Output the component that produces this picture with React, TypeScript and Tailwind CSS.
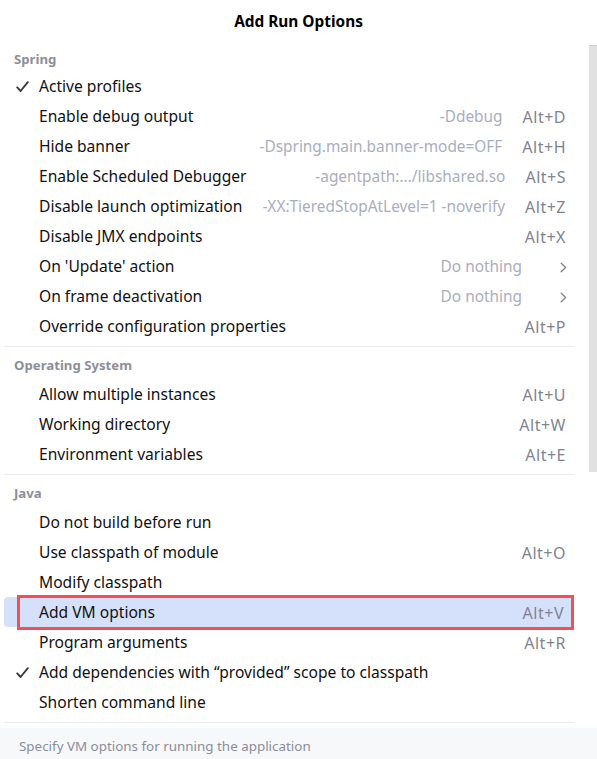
import React from 'react';

type Item = {
  label: string;
  hint?: string;
  shortcut?: string;
  checked?: boolean;
  submenu?: boolean;
  selected?: boolean;
};

type Section = { title: string; items: Item[] };

const sections: Section[] = [
  {
    title: 'Spring',
    items: [
      { label: 'Active profiles', checked: true },
      { label: 'Enable debug output', hint: '-Ddebug', shortcut: 'Alt+D' },
      { label: 'Hide banner', hint: '-Dspring.main.banner-mode=OFF', shortcut: 'Alt+H' },
      { label: 'Enable Scheduled Debugger', hint: '-agentpath:.../libshared.so', shortcut: 'Alt+S' },
      { label: 'Disable launch optimization', hint: '-XX:TieredStopAtLevel=1 -noverify', shortcut: 'Alt+Z' },
      { label: 'Disable JMX endpoints', shortcut: 'Alt+X' },
      { label: "On 'Update' action", hint: 'Do nothing', submenu: true },
      { label: 'On frame deactivation', hint: 'Do nothing', submenu: true },
      { label: 'Override configuration properties', shortcut: 'Alt+P' },
    ],
  },
  {
    title: 'Operating System',
    items: [
      { label: 'Allow multiple instances', shortcut: 'Alt+U' },
      { label: 'Working directory', shortcut: 'Alt+W' },
      { label: 'Environment variables', shortcut: 'Alt+E' },
    ],
  },
  {
    title: 'Java',
    items: [
      { label: 'Do not build before run' },
      { label: 'Use classpath of module', shortcut: 'Alt+O' },
      { label: 'Modify classpath' },
      { label: 'Add VM options', shortcut: 'Alt+V', selected: true },
      { label: 'Program arguments', shortcut: 'Alt+R' },
      { label: 'Add dependencies with \u201cprovided\u201d scope to classpath', checked: true },
      { label: 'Shorten command line' },
    ],
  },
];

const Check = () => (
  <svg width="13" height="12" viewBox="0 0 13 12" fill="none">
    <path d="M1.2 6.4 L4.6 10 L11.8 1.2" stroke="#3b3b3b" strokeWidth="1.9" strokeLinecap="round" strokeLinejoin="round" />
  </svg>
);

const Chevron = () => (
  <svg width="7" height="11" viewBox="0 0 7 11" fill="none">
    <path d="M1.2 1.2 L5.6 5.5 L1.2 9.8" stroke="#7d818c" strokeWidth="1.3" strokeLinecap="round" strokeLinejoin="round" />
  </svg>
);

const Row = ({ item }: { item: Item }) => (
  <div
    className={`relative flex h-[30px] items-center pl-[12px] pr-[8px] pt-[2px] ${
      item.selected ? 'bg-[#d5e1fb] rounded-l-[4px] mr-[2px]' : ''
    }`}
  >
    <div className="flex w-[23px] items-center">{item.checked && <Check />}</div>
    <span className="whitespace-nowrap text-[15.6px] text-[#111111]">{item.label}</span>
    <div className="flex-1" />
    {item.hint && <span className="whitespace-nowrap text-[15.4px] text-[#a9aebd]">{item.hint}</span>}
    {item.shortcut && (
      <span className="ml-[20px] whitespace-nowrap text-[16px] tracking-[0.5px] text-[#80848f]">
        {item.shortcut}
      </span>
    )}
    {item.submenu && (
      <span className="ml-[38px] mr-[-1px] flex items-center">
        <Chevron />
      </span>
    )}
    {item.selected && (
      <div className="pointer-events-none absolute left-[13px] right-[-2px] top-[-2px] bottom-[-3px] border-[3px] border-[#f34f57]" />
    )}
  </div>
);

export default function App() {
  return (
    <div
      className="flex h-[759px] w-[597px] flex-col overflow-hidden bg-white"
      style={{ fontFamily: '"Noto Sans", "Open Sans", Arial, sans-serif' }}
    >
      <div className="flex h-[44px] items-center justify-center">
        <span className="text-[15.4px] font-bold text-black">Add Run Options</span>
      </div>
      <div className="flex flex-1">
        <div className="w-[574px] pl-[4px]">
          {sections.map((section, si) => (
            <div key={section.title}>
              {si > 0 && <div className="h-px bg-[#ebebeb]" />}
              <div
                className={`flex items-center pl-[10px] ${
                  si === 0 ? 'h-[27px] pt-[5px]' : 'h-[32px] pt-[6px]'
                }`}
              >
                <span className="text-[13.2px] font-bold text-[#8c8f9a]">{section.title}</span>
              </div>
              {section.items.map((item) => (
                <Row key={item.label} item={item} />
              ))}
              <div className="h-[5px]" />
            </div>
          ))}
          <div className="h-px bg-[#ebebeb]" />
        </div>
        <div className="flex flex-1 justify-end">
          <div className="mt-px h-[427px] w-[8px] border-t border-[#cfcfcf] bg-[#e1e1e1]" />
        </div>
      </div>
      <div className="mt-[5px] flex h-[31px] items-center bg-[#f7f8fa] pl-[19px] pt-[5px]">
        <span className="text-[13.4px] text-[#8a8e99]">Specify VM options for running the application</span>
      </div>
    </div>
  );
}
